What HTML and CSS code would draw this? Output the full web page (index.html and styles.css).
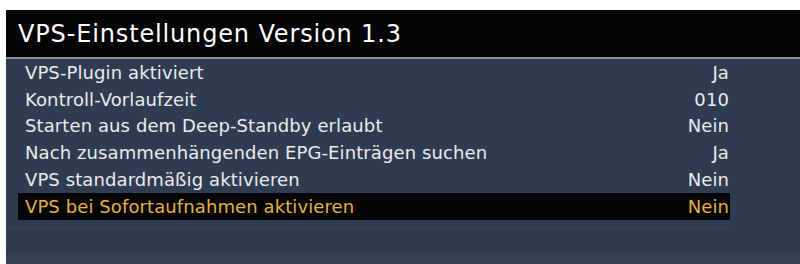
FILE: index.html
```html
<!DOCTYPE html>
<html lang="de">
<head>
<meta charset="utf-8">
<title>VPS-Einstellungen</title>
<link rel="stylesheet" href="styles.css">
</head>
<body>
<div class="screen">
  <div class="header">
    <h1 class="title">VPS-Einstellungen Version 1.3</h1>
  </div>
  <div class="panel">
    <ul class="list">
      <li class="row"><span class="label">VPS-Plugin aktiviert</span><span class="value">Ja</span></li>
      <li class="row"><span class="label">Kontroll-Vorlaufzeit</span><span class="value">010</span></li>
      <li class="row"><span class="label">Starten aus dem Deep-Standby erlaubt</span><span class="value">Nein</span></li>
      <li class="row"><span class="label">Nach zusammenhängenden EPG-Einträgen suchen</span><span class="value">Ja</span></li>
      <li class="row"><span class="label">VPS standardmäßig aktivieren</span><span class="value">Nein</span></li>
      <li class="row selected"><span class="label">VPS bei Sofortaufnahmen aktivieren</span><span class="value">Nein</span></li>
    </ul>
    <div class="divider"></div>
  </div>
  <div class="footer"></div>
</div>
</body>
</html>
```

FILE: styles.css
```css
html, body {
  margin: 0;
  padding: 0;
  background: #ffffff;
  height: 100%;
  overflow: hidden;
}

.screen {
  margin: 10px 0 0 6px;
  height: 254px;
  display: flex;
  flex-direction: column;
  font-family: "DejaVu Sans", "Open Sans", sans-serif;
}

.header {
  height: 47px;
  flex: none;
  background: #040306;
  border-bottom: 2px solid #8a8d92;
  display: flex;
  align-items: center;
  padding-left: 12px;
}

.title {
  margin: 0;
  font-weight: 400;
  font-size: 24px;
  color: #ffffff;
  letter-spacing: 0.85px;
}

.panel {
  flex: 1;
  background: #2e3b51;
  padding-left: 12px;
}

.list {
  list-style: none;
  margin: 0;
  padding: 0;
  width: 712px;
}

.row {
  height: 26.8px;
  display: flex;
  align-items: center;
  justify-content: space-between;
  padding: 0 1px 0 7px;
  font-size: 18px;
  letter-spacing: 0.1px;
  color: #ececec;
}

.row.selected {
  background: #040306;
  color: #e4b23c;
}

.divider {
  margin-top: 8px;
  margin-left: -12px;
  width: 724px;
  height: 1px;
  background: #38455a;
}

.footer {
  height: 10px;
  flex: none;
  background: #343f53;
}
```
